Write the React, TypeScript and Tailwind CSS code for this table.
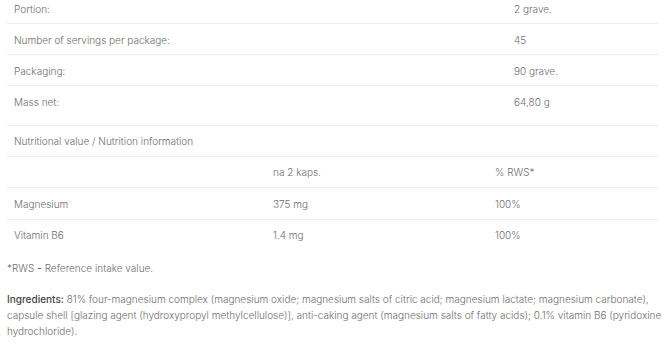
const rows = [
  { label: "Portion:", value: "2 grave.", first: true },
  { label: "Number of servings per package:", value: "45" },
  { label: "Packaging:", value: "90 grave." },
  { label: "Mass net:", value: "64,80 g", tall: true },
];

const nutrients = [
  { name: "Magnesium", amount: "375 mg", rws: "100%" },
  { name: "Vitamin B6", amount: "1.4 mg", rws: "100%", last: true },
];

const App = () => {
  return (
    <div className="w-[665px] h-[344px] overflow-hidden bg-white px-[7px] text-[10px] leading-4 font-light text-[#6e6e6e] [font-family:Inter,'Open_Sans',sans-serif]">
      <div>
        {rows.map((r) => (
          <div
            key={r.label}
            className={`flex border-b border-[#ececec] px-[7px] ${r.first ? "pt-px" : "pt-2"} ${r.tall ? "pb-[15px]" : "pb-[6px]"}`}
          >
            <div className="w-[500px]">{r.label}</div>
            <div>{r.value}</div>
          </div>
        ))}
        <div className="border-b border-[#ececec] px-[7px] pt-[7px] pb-[7px]">
          Nutritional value / Nutrition information
        </div>
      </div>

      <div>
        <div className="flex border-b border-[#ececec] px-[7px] pt-[7px] pb-[7px]">
          <div className="w-[259px]"></div>
          <div className="w-[222px]">na 2 kaps.</div>
          <div>% RWS*</div>
        </div>
        {nutrients.map((n) => (
          <div
            key={n.name}
            className={`flex px-[7px] ${n.last ? "pt-[7px] pb-2" : "pt-2 pb-[7px] border-b border-[#ececec]"}`}
          >
            <div className="w-[259px]">{n.name}</div>
            <div className="w-[222px]">{n.amount}</div>
            <div>{n.rws}</div>
          </div>
        ))}
      </div>

      <p className="mt-[9px]">
        *RWS <span className="font-semibold">-</span> Reference intake value.
      </p>

      <p className="mt-[15px] whitespace-nowrap">
        <span className="font-medium text-[#444]">Ingredients:</span> 81% four-magnesium complex (magnesium oxide; magnesium salts of citric acid; magnesium lactate; magnesium carbonate),
        <br />
        capsule shell [glazing agent (hydroxypropyl methylcellulose)], anti-caking agent (magnesium salts of fatty acids); 0.1% vitamin B6 (pyridoxine
        <br />
        hydrochloride).
      </p>
    </div>
  );
};

export default App;
